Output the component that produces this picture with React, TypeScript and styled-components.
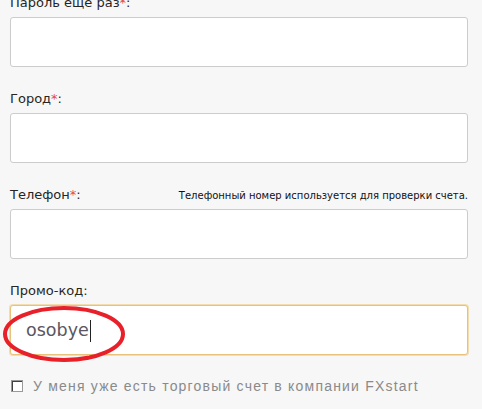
import React from 'react'
import styled, { createGlobalStyle } from 'styled-components'

const GlobalStyle = createGlobalStyle`
  html, body {
    margin: 0;
    padding: 0;
    background: #F7F7F7;
    overflow: hidden;
  }
`

const fields = [
  { label: 'Пароль еще раз', required: true },
  { label: 'Город', required: true },
  { label: 'Телефон', required: true, hint: 'Телефонный номер используется для проверки счета.' },
]

const App = () => {
  return <Page>
    <GlobalStyle />
    <Form>
      {fields.map((f) => (
        <Field key={f.label}>
          <LabelRow>
            <Label>{f.label}{f.required && <Star>*</Star>}:</Label>
            {f.hint && <Hint>{f.hint}</Hint>}
          </LabelRow>
          <TextInput type='text' />
        </Field>
      ))}

      <Field>
        <LabelRow>
          <Label>Промо-код:</Label>
        </LabelRow>
        <PromoWrap>
          <TextInput type='text' $focused defaultValue='osobye' />
          <Caret />
          <Circle width='124' height='58' viewBox='0 0 124 58'>
            <ellipse cx='62' cy='29' rx='59' ry='26' fill='none' stroke='#E8202A' strokeWidth='4' />
          </Circle>
        </PromoWrap>
      </Field>

      <CheckRow>
        <CheckBox />
        <CheckText>У меня уже есть торговый счет в компании FXstart</CheckText>
      </CheckRow>
    </Form>
  </Page>
}

export default App

const Page = styled.div`
  width: 482px;
  height: 409px;
  overflow: hidden;
  background: #F7F7F7;
`

const Form = styled.div`
  display: flex;
  flex-direction: column;
  gap: 24px;
  margin-top: -5px;
  padding: 0 14px 0 10px;
`

const Field = styled.div`
  display: flex;
  flex-direction: column;
  gap: 6px;
`

const LabelRow = styled.div`
  display: flex;
  justify-content: space-between;
  align-items: baseline;
  height: 16px;
`

const Label = styled.label`
  font-family: 'DejaVu Sans', Verdana, sans-serif;
  font-size: 13px;
  line-height: 16px;
  color: #262626;
`

const Star = styled.span`
  color: #E04A4A;
`

const Hint = styled.span`
  font-family: 'DejaVu Sans', Tahoma, sans-serif;
  font-size: 10px;
  line-height: 16px;
  color: #111111;
`

const TextInput = styled.input<{ $focused?: boolean }>`
  box-sizing: border-box;
  width: 458px;
  height: 50px;
  margin: 0;
  padding: 0 0 0 15px;
  background: #FFFFFF;
  border: 1px solid ${(p) => (p.$focused ? '#E8C27A' : '#CCCCCC')};
  box-shadow: ${(p) => (p.$focused ? '0 0 0 1px #F3DDAE' : 'none')};
  border-radius: 3px;
  outline: none;

  font-family: 'DejaVu Sans', Verdana, sans-serif;
  font-size: 17.5px;
  color: #5B5662;
`

const PromoWrap = styled.div`
  position: relative;
  width: 458px;
`

const Caret = styled.span`
  position: absolute;
  left: 80px;
  top: 15px;
  width: 1px;
  height: 22px;
  background: #222222;
`

const Circle = styled.svg`
  position: absolute;
  left: -8px;
  top: 0px;
  pointer-events: none;
`

const CheckRow = styled.div`
  display: flex;
  align-items: center;
  gap: 10px;
  margin-top: -2px;
  padding-left: 1px;
`

const CheckBox = styled.span`
  box-sizing: border-box;
  width: 12px;
  height: 12px;
  background: #FFFFFF;
  border-top: 2px solid #404040;
  border-left: 2px solid #404040;
  border-right: 1px solid #D4D0C8;
  border-bottom: 1px solid #D4D0C8;
  outline: 1px solid #9A9A9A;
  outline-offset: -1px;
`

const CheckText = styled.span`
  font-family: 'Liberation Sans', Arial, sans-serif;
  font-size: 14px;
  line-height: 18px;
  letter-spacing: 1.2px;
  color: #8A8A8A;
`
